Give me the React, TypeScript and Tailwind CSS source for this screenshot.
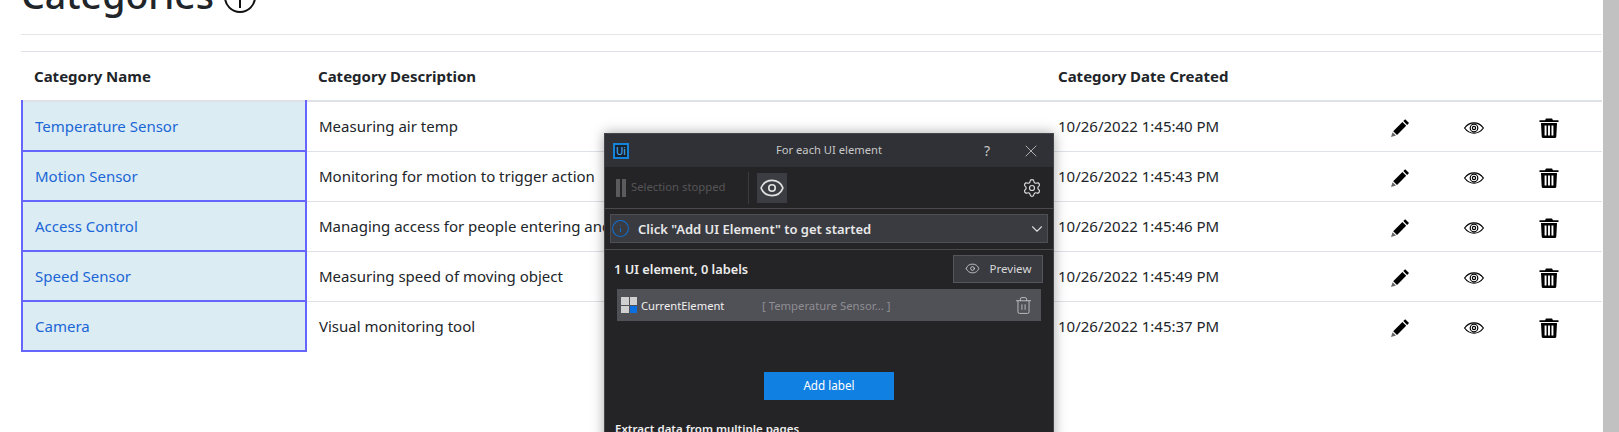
import React from 'react';
import { ChevronDown, Eye, Info, Settings, Trash2, X } from 'lucide-react';

const rows = [
  { name: 'Temperature Sensor', description: 'Measuring air temp', created: '10/26/2022 1:45:40 PM' },
  { name: 'Motion Sensor', description: 'Monitoring for motion to trigger action', created: '10/26/2022 1:45:43 PM' },
  { name: 'Access Control', description: 'Managing access for people entering and leaving', created: '10/26/2022 1:45:46 PM' },
  { name: 'Speed Sensor', description: 'Measuring speed of moving object', created: '10/26/2022 1:45:49 PM' },
  { name: 'Camera', description: 'Visual monitoring tool', created: '10/26/2022 1:45:37 PM' },
];

const PencilIcon = () => (
  <svg width="20" height="20" viewBox="0 0 20 20" fill="#000" className="block mt-[3px]">
    <path d="M15.200 1.200l3.800 3.800-1.900 1.900-3.800-3.800z" />
    <path d="M12.400 4l3.800 3.800-9.200 9.200-3.800-3.800z" />
    <path d="M2.600 14.200l3.400 3.400-5 1.500z" fill="#666" />
  </svg>
);

const EyeIcon = () => (
  <svg width="20" height="20" viewBox="0 0 20 20" fill="none" stroke="#000" strokeWidth="1.200" className="block mt-[3px]">
    <path d="M0.600 10C3.200 6.400 6.400 4.800 10 4.800s6.800 1.600 9.400 5.200c-2.600 3.600-5.800 5.200-9.400 5.200s-6.800-1.600-9.400-5.200z" />
    <circle cx="10" cy="10" r="3.800" />
    <circle cx="10" cy="10" r="1.600" />
  </svg>
);

const TrashIcon = () => (
  <svg width="20" height="20" viewBox="0 0 20 20" fill="#000" className="block mt-[3px]">
    <path d="M7 0.500h6l1 1.700h5.500v1.800H0.500V2.200H6z" />
    <path d="M2 5h16l-.7 13.500a1.500 1.500 0 0 1-1.500 1.500H4.200a1.500 1.500 0 0 1-1.500-1.500zM5.600 7.500v10h1.900v-10zM9.050 7.500v10h1.900v-10zM12.500 7.500v10h1.900v-10z" fillRule="evenodd" />
  </svg>
);

const ElementIcon = () => (
  <div className="grid grid-cols-2 gap-px w-4 h-4 shrink-0">
    <div className="bg-[#d0d0d0]" />
    <div className="bg-[#d0d0d0]" />
    <div className="bg-[#d0d0d0]" />
    <div className="bg-[#0a6fe0]" />
  </div>
);

const SelectorPopup = () => (
  <div className="absolute left-[604px] top-[133px] w-[450px] h-[310px] bg-[#242426] text-white shadow-[0_0_12px_rgba(0,0,0,0.35)] border-x border-t border-[#44464b]">
    <div className="flex items-center h-[33px] bg-[#2f3136] pl-2 pr-[12px]">
      <div className="flex items-center justify-center w-[16px] h-[16px] border-2 border-[#1583d8] bg-[#16222e] text-[#4aa8ee] text-[10px] leading-none font-medium">Ui</div>
      <div className="flex-1 text-center text-[11.200px] text-[#c8c8c8] pl-[45px]">For each UI element</div>
      <span className="text-[14px] text-[#c8c8c8] mr-[31px]">?</span>
      <X size={20} className="text-[#c8c8c8]" strokeWidth={1} />
    </div>
    <div className="flex items-center h-[42px] border-b border-[#4a4a4d] pl-[11px] pr-[11px]">
      <div className="flex gap-[2px] mr-[5px]">
        <div className="w-1 h-[18px] bg-[#5b5b5d]" />
        <div className="w-1 h-[18px] bg-[#5b5b5d]" />
      </div>
      <span className="text-[11.300px] text-[#555557]">Selection stopped</span>
      <div className="w-px h-8 bg-[#3a3a3c] ml-[22px] mr-2" />
      <div className="flex items-center justify-center w-[30px] h-[30px] bg-[#3c3d42]">
        <Eye size={26} strokeWidth={1.500} className="text-[#e2e2e2]" />
      </div>
      <Settings size={20} strokeWidth={1.400} className="ml-auto text-[#dcdcdc]" />
    </div>
    <div className="px-[5px] pt-[5px] pb-[6px] border-b border-[#4a4a4d]">
      <div className="flex items-center h-[29px] bg-[#393b41] border border-[#4d4f55] pl-0 pr-[1px]">
        <Info size={19} strokeWidth={1.300} className="text-[#0f6fd0]" />
        <span className="ml-[8px] text-[13px] font-semibold text-[#e8e8e8] relative top-px">Click "Add UI Element" to get started</span>
        <ChevronDown size={18} strokeWidth={1.500} className="ml-auto text-[#d8d8d8]" />
      </div>
    </div>
    <div className="flex items-center justify-between h-[39px] pl-[9px] pr-[10px]">
      <span className="text-[12.800px] font-semibold text-[#ececec]">1 UI element, 0 labels</span>
      <button className="flex items-center justify-center gap-[10px] w-[90px] h-[28px] -mt-[2px] bg-[#393b41] border border-[#54565b] text-[11.500px] text-[#d8d8d8]">
        <Eye size={15} strokeWidth={1.300} />
        Preview
      </button>
    </div>
    <div className="mx-3 flex items-center h-[32px] bg-[#505057] pl-1 pr-[8px]">
      <ElementIcon />
      <span className="ml-1 text-[11.200px] text-[#f0f0f0] w-[121px] relative top-px">CurrentElement</span>
      <span className="text-[11.300px] text-[#8e8e92] relative top-px">[ Temperature Sensor... ]</span>
      <Trash2 size={19} strokeWidth={1.100} className="ml-auto text-[#c8c8c8]" />
    </div>
    <div className="flex justify-center mt-[51px]">
      <button className="w-[130px] h-[28px] bg-[#1080e2] text-[11.700px] text-white">Add label</button>
    </div>
    <div className="mt-[20px] pl-[10px] text-[11.500px] font-semibold text-[#f0f0f0]">Extract data from multiple pages</div>
  </div>
);

export default function App() {
  return (
    <div className="relative flex h-[432px] w-[1619px] overflow-hidden bg-white font-['Noto_Sans',sans-serif] text-[#212529]">
      <div className="flex-1 pl-[21px] pr-[1px]">
        <h1 className="flex items-center gap-[10px] h-[34px] -mt-[22px] text-[37.500px] leading-[34px] font-medium text-[#212529]">
          Categories
          <svg width="32" height="32" viewBox="0 0 32 32" fill="none" stroke="#111" strokeWidth="2" className="mt-[4px]">
            <circle cx="16" cy="16" r="15" />
            <path d="M16 5v22M5 16h22" />
          </svg>
        </h1>
        <div className="mt-[22px] h-px bg-[#e3e4e6]" />
        <div className="mt-[16px] border-t border-[#dee2e6]">
          <table className="w-full table-fixed border-collapse text-[15px]">
            <colgroup>
              <col className="w-[284px]" />
              <col className="w-[752px]" />
              <col className="w-[330px]" />
              <col className="w-[75px]" />
              <col className="w-[75px]" />
              <col />
            </colgroup>
            <thead>
              <tr className="h-[49px] border-b-2 border-[#dee2e6]">
                <th className="pl-[12px] text-left font-bold">Category Name</th>
                <th className="pl-[12px] text-left font-bold">Category Description</th>
                <th className="text-left font-bold">Category Date Created</th>
                <th />
                <th />
                <th />
              </tr>
            </thead>
            <tbody>
              {rows.map((row, idx) => (
                <tr key={row.name} className="h-[50px] border-b border-[#dee2e6] last:border-b-0">
                  <td className={`pl-[12px] bg-[#dcecf3] border-2 border-[#6666ff] text-[#1a66d6] ${idx === 0 ? 'border-t-0' : ''}`}>{row.name}</td>
                  <td className="pl-[12px]">{row.description}</td>
                  <td>{row.created}</td>
                  <td className="pl-[2px]"><PencilIcon /></td>
                  <td className="pl-[1px]"><EyeIcon /></td>
                  <td className="pl-[1px]"><TrashIcon /></td>
                </tr>
              ))}
            </tbody>
          </table>
        </div>
      </div>
      <div className="w-[16px] bg-[#c1c1c1]" />
      <SelectorPopup />
    </div>
  );
}
